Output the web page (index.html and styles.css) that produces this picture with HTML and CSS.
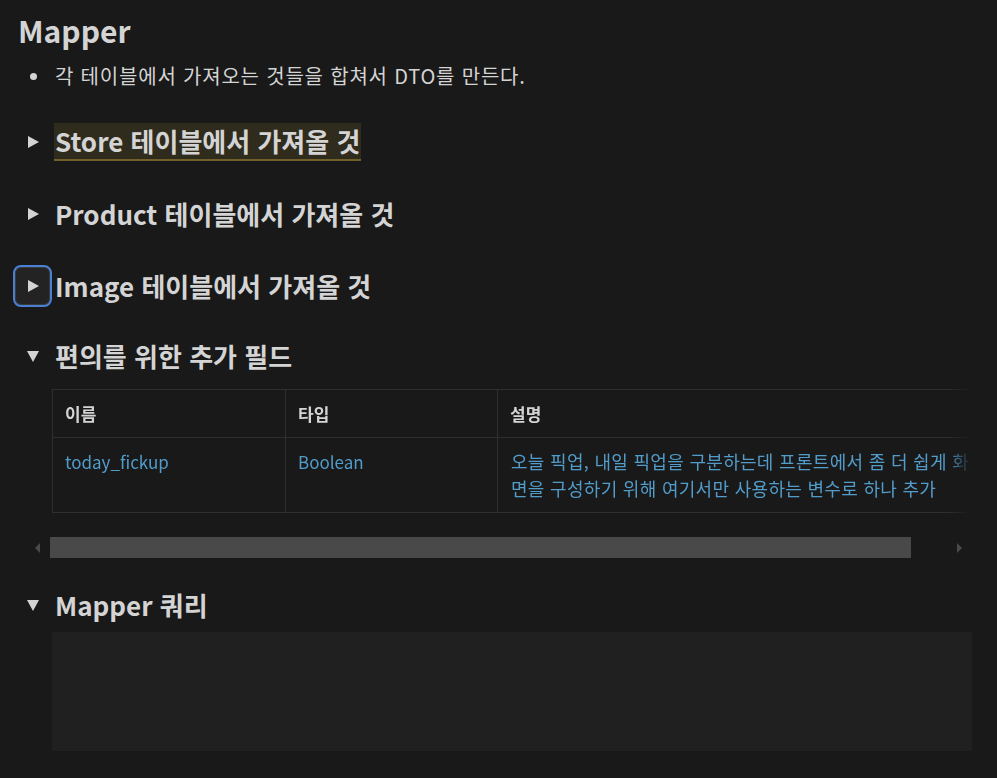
FILE: index.html
```html
<!DOCTYPE html>
<html lang="ko">
<head>
    <meta charset="UTF-8">
    <title>Mapper</title>
    <link rel="stylesheet" href="styles.css">
</head>
<body>
    <div class="page">
        <h2 class="title">Mapper</h2>
        <ul class="bullets">
            <li>각 테이블에서 가져오는 것들을 합쳐서 DTO를 만든다.</li>
        </ul>

        <div class="toggle first">
            <div class="toggle-row">
                <button class="toggle-btn"><span class="tri-right"></span></button>
                <h3 class="toggle-title"><span class="mark">Store 테이블에서 가져올 것</span></h3>
            </div>
        </div>
        <div class="toggle">
            <div class="toggle-row">
                <button class="toggle-btn"><span class="tri-right"></span></button>
                <h3 class="toggle-title">Product 테이블에서 가져올 것</h3>
            </div>
        </div>
        <div class="toggle">
            <div class="toggle-row">
                <button class="toggle-btn focused"><span class="tri-right"></span></button>
                <h3 class="toggle-title">Image 테이블에서 가져올 것</h3>
            </div>
        </div>

        <div class="toggle open">
            <div class="toggle-row">
                <button class="toggle-btn"><span class="tri-down"></span></button>
                <h3 class="toggle-title">편의를 위한 추가 필드</h3>
            </div>
            <div class="toggle-body">
                <div class="table-scroll">
                    <table class="fields">
                        <thead>
                            <tr>
                                <th class="c1">이름</th>
                                <th class="c2">타입</th>
                                <th class="c3">설명</th>
                            </tr>
                        </thead>
                        <tbody>
                            <tr>
                                <td>today_fickup</td>
                                <td>Boolean</td>
                                <td class="desc">오늘 픽업, 내일 픽업을 구분하는데 프론트에서 좀 더 쉽게 화면을 구성하기 위해 여기서만 사용하는 변수로 하나 추가</td>
                            </tr>
                        </tbody>
                    </table>
                </div>
                <div class="scrollbar">
                    <span class="arrow-left"></span>
                    <div class="track"><div class="thumb"></div></div>
                    <span class="arrow-right"></span>
                </div>
            </div>
        </div>

        <div class="toggle open last">
            <div class="toggle-row">
                <button class="toggle-btn"><span class="tri-down"></span></button>
                <h3 class="toggle-title">Mapper 쿼리</h3>
            </div>
            <div class="toggle-body">
                <div class="code-block"></div>
            </div>
        </div>
    </div>
</body>
</html>
```

FILE: styles.css
```css
body {
    margin: 0;
    padding: 0;
    background: #191919;
    color: #d4d4d4;
    font-family: "Noto Sans CJK KR", "Noto Sans", sans-serif;
}
.page {
    padding: 10px 0 0 13px;
    width: 959px;
}
.title {
    margin: 0 0 0 5px;
    font-size: 30px;
    line-height: 40px;
    font-weight: 600;
}
.bullets {
    list-style: none;
    margin: 14px 0 0 0;
    padding: 0 0 0 42px;
    font-size: 20px;
    line-height: 24px;
    letter-spacing: 0.8px;
}
.bullets li {
    position: relative;
}
.bullets li::before {
    content: "";
    position: absolute;
    left: -25px;
    top: 9px;
    width: 7px;
    height: 7px;
    border-radius: 50%;
    background: #d4d4d4;
}
.toggle {
    padding: 15px 0;
}
.toggle.first {
    padding-top: 33px;
}
.toggle.open {
    padding-top: 13px;
}
.toggle-row {
    display: flex;
    align-items: center;
    height: 42px;
}
.toggle-btn {
    width: 39px;
    height: 42px;
    margin: 0;
    padding: 0;
    background: transparent;
    border: 2px solid transparent;
    border-radius: 8px;
    display: flex;
    align-items: center;
    justify-content: center;
}
.toggle-btn.focused {
    border-color: #4a7fd6;
    box-shadow: inset 0 0 0 1px #3a3a3a;
    background: #232323;
}
.tri-right {
    width: 0;
    height: 0;
    border-top: 6px solid transparent;
    border-bottom: 6px solid transparent;
    border-left: 11px solid #d4d4d4;
    margin-left: 2px;
}
.tri-down {
    width: 0;
    height: 0;
    border-left: 6px solid transparent;
    border-right: 6px solid transparent;
    border-top: 11px solid #d4d4d4;
}
.toggle-title {
    margin: 0 0 0 3px;
    font-size: 26px;
    line-height: 36px;
    font-weight: 600;
}
.mark {
    display: inline-block;
    background: #302c1d;
    border-bottom: 2px solid #72602b;
    line-height: 36px;
    padding: 0 1px;
    margin-left: -1px;
}
.toggle-body {
    margin: 12px 0 0 39px;
}
.table-scroll {
    width: 920px;
    overflow: hidden;
    -webkit-mask-image: linear-gradient(to right, #000 895px, transparent 920px);
    mask-image: linear-gradient(to right, #000 895px, transparent 920px);
}
.fields {
    border-collapse: collapse;
    font-size: 17px;
    line-height: 27px;
    table-layout: fixed;
    width: 940px;
}
.fields th, .fields td {
    border: 1px solid #2f2f2f;
    padding: 10px 12px;
    text-align: left;
    vertical-align: top;
}
.fields th {
    font-weight: 600;
    color: #d4d4d4;
}
.fields td {
    color: #529cca;
}
.fields td.desc {
    font-size: 18px;
    letter-spacing: 0.3px;
    padding-left: 13px;
}
.fields .c1 { width: 208px; }
.fields .c2 { width: 187px; }
.fields .c3 { width: 470px; }
.scrollbar {
    display: flex;
    align-items: center;
    height: 21px;
    margin: 24px 0 0 -17px;
}
.arrow-left, .arrow-right {
    width: 0;
    height: 0;
    border-top: 5px solid transparent;
    border-bottom: 5px solid transparent;
}
.arrow-left {
    border-right: 5px solid #4a4a4a;
    margin: 0 10px 0 0;
}
.arrow-right {
    border-left: 5px solid #4a4a4a;
    margin-left: 46px;
}
.track {
    width: 861px;
    height: 21px;
}
.thumb {
    height: 100%;
    background: #494949;
}
.toggle.last {
    padding-top: 11px;
}
.toggle.last .toggle-body {
    margin-top: 6px;
}
.code-block {
    width: 920px;
    height: 119px;
    background: #202020;
}
```
